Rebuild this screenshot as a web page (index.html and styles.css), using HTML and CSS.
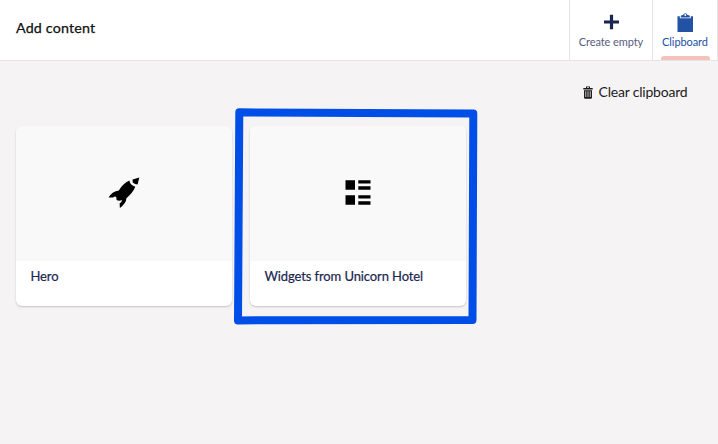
FILE: index.html
```html
<!DOCTYPE html>
<html lang="en">
<head>
<meta charset="utf-8">
<title>Add content</title>
<link rel="stylesheet" href="styles.css">
</head>
<body>
<header class="header">
  <h1 class="title">Add content</h1>
  <nav class="tabs">
    <button class="tab tab-create">
      <svg class="tab-icon" width="20" height="20" viewBox="0 0 20 20"><path d="M10.500 2.800v14.400M3 10h15" stroke="currentColor" stroke-width="3.200"/></svg>
      <span class="tab-label">Create empty</span>
    </button>
    <button class="tab tab-clipboard active">
      <svg class="tab-icon" width="20" height="20" viewBox="0 0 20 20"><path fill="currentColor" fill-rule="evenodd" d="M2.500 4.300h2.300v2h11v-2H18V20H2.500zM5.800 5.400V3.800l1.800-.9h.5a2.300 2.300 0 0 1 4.400 0h.5l1.800.9v1.600zM10.300 2.100a1 1 0 1 0 0 2 1 1 0 0 0 0-2z"/></svg>
      <span class="tab-label">Clipboard</span>
    </button>
  </nav>
</header>
<main class="content">
  <div class="toolbar">
    <button class="clear">
      <svg width="10" height="13" viewBox="0 0 10 13"><path fill="currentColor" fill-rule="evenodd" d="M.3 1.900h2.700V.600h4v1.300h2.700v1.500H.3zM4 1.300v.6h2v-.6zM1 4.200h8v7.300q0 1.200-1.200 1.200H2.200Q1 12.700 1 11.500zM2.400 5.300v5.800h.8V5.300zM4.600 5.300v5.800h.8V5.300zM6.800 5.300v5.800h.8V5.300z"/></svg>
      <span>Clear clipboard</span>
    </button>
  </div>
  <div class="cards">
    <article class="card">
      <div class="preview">
        <svg width="32" height="32" viewBox="0 0 32 32"><path d="M31.300.600 29.600 7.600Q27 7.500 24.700 5.500L24.600 2.500ZM21.300 3.600Q22.300 8.500 27.300 9.700Q25 15.500 18.400 21.300Q18.200 26.500 11.900 30.900L11.600 26.500Q14 25 14 22.800Q11.500 24.400 8.600 23L8.300 20.200Q7 18.800 5.200 20.500L.6 20.500Q4.500 14 10.800 13.500Q15 6.500 21.300 3.600Z"/></svg>
      </div>
      <div class="name">Hero</div>
    </article>
    <article class="card selected">
      <div class="preview">
        <svg width="26" height="26" viewBox="0 0 26 26"><path d="M.5.300h9.500v9.500H.5zM13.300.300h12.200v3.300H13.300zM13.300 6.300h12.200v3.500H13.300zM.5 15.300h9.500v9.500H.5zM13.300 15.300h12.200v3.300H13.300zM13.300 21.300h12.200v3.500H13.300z"/></svg>
      </div>
      <div class="name">Widgets from Unicorn Hotel</div>
      <svg class="highlight" width="246" height="220" viewBox="0 0 246 220"><path d="M6.300 7.300 240.300 8.600 239.500 215 5 215.400Z" fill="none" stroke="#004ee8" stroke-width="8" stroke-linejoin="round"/></svg>
    </article>
  </div>
</main>
</body>
</html>
```

FILE: styles.css
```css
* { box-sizing: border-box; }
body {
  margin: 0;
  height: 444px;
  overflow: hidden;
  background: #f5f3f4;
  color: #1b264f;
  font-family: Lato, "Liberation Sans", sans-serif;
}
button { margin: 0; padding: 0; border: 0; background: none; font: inherit; color: inherit; }
svg { display: block; }
.header {
  display: flex;
  justify-content: space-between;
  height: 61px;
  background: #fff;
  border-bottom: 1px solid #e4e3e5;
}
.title {
  margin: 0;
  padding: 19px 16px;
  font-size: 14.3px;
  line-height: 17px;
  font-weight: 400;
  letter-spacing: .16px;
  color: #111;
  -webkit-text-stroke: .25px #111;
}
.tabs { display: flex; }
.tab {
  position: relative;
  display: flex;
  flex-direction: column;
  align-items: center;
  padding-top: 12px;
  border-left: 1px solid #e4e3e5;
}
.tab-create { width: 83px; }
.tab-clipboard { width: 66px; border-right: 1px solid #e4e3e5; }
.tab-label { margin-top: 3px; font-size: 11px; line-height: 14px; letter-spacing: -.09px; white-space: nowrap; }
.tab-create .tab-label { color: #565d80; }
.active { color: #2152a3; }
.active::after {
  content: "";
  position: absolute;
  left: 8px;
  right: 7px;
  bottom: 0;
  height: 4px;
  border-radius: 3px 3px 0 0;
  background: #f5c1bc;
}
.content { padding: 20px 16px; }
.toolbar { display: flex; justify-content: flex-end; padding-right: 14.5px; }
.clear {
  display: flex;
  align-items: center;
  gap: 6px;
  height: 22px;
  font-size: 14px;
  letter-spacing: -.2px;
  color: #1c1c1c;
}
.clear span { margin-top: -2px; }
.cards {
  display: grid;
  grid-template-columns: repeat(2, 216px);
  gap: 18px;
  margin-top: 23px;
}
.card {
  position: relative;
  height: 180px;
  border-radius: 6px;
  background: #fff;
  box-shadow: 0 1px 2px rgba(0, 0, 0, .2);
}
.preview {
  display: flex;
  align-items: center;
  justify-content: center;
  height: 135px;
  padding-bottom: 2px;
  border-radius: 6px 6px 0 0;
  background: #f9f9f9;
  color: #000;
}
.name {
  padding: 7px 14.5px;
  font-size: 13px;
  line-height: 17px;
  letter-spacing: -.11px;
  -webkit-text-stroke: .2px #1b264f;
}
.highlight { position: absolute; left: -17px; top: -21px; }
```
